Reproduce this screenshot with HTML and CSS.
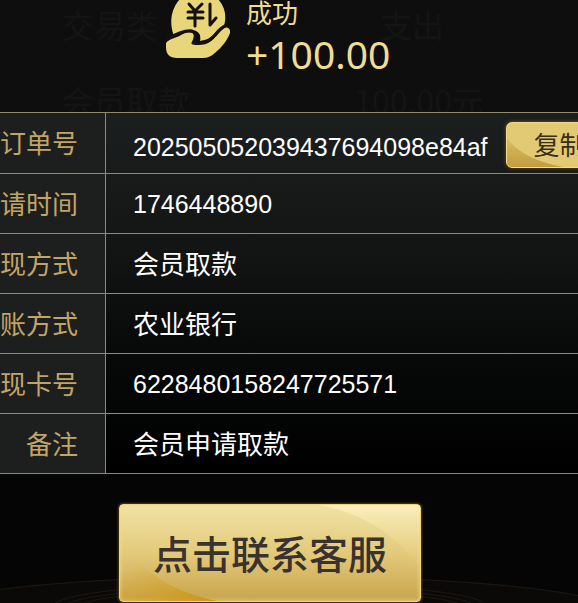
FILE: index.html
```html
<!DOCTYPE html>
<html lang="zh-CN">
  <head>
    <meta charset="UTF-8" />
    <meta name="viewport" content="width=device-width, initial-scale=1.0" />
    <title>订单详情</title>
    <link rel="stylesheet" href="styles.css">
  </head>
  <body>
    <div class="root">
      <header class="status">
        <div class="ghost" aria-hidden="true">
          <div class="ghost-row"><span>交易类</span><span>支出</span></div>
          <div class="ghost-row"><span>会员取款</span><span>100.00元</span></div>
        </div>
        <svg class="status-icon" viewBox="0 0 64 58" aria-hidden="true">
          <path class="gold" d="M7 33C3 20 6 7 15 -2Q33 -16 51 -2C59 6 61 16 58 26C54 27 51 30 47 35C43 39 39 40 34 41Q36 31 26 30Q21 31 7 35Z" />
          <path class="gold" d="M0 43C4 38 11 38 17 34C22 32 27 32 29 35C30 38 28 41 26 43Q35 45 43 42C49 39 52 33 57 29C60 26 65 28 64 33C61 41 55 48 50 52Q44 58 37 58H11Q0 58 0 47Z" />
          <path class="cut" d="M0 40C8 34 20 30 26 31Q32 34 27 43Q37 45 44 40C50 36 52 29 59 26" />
          <path class="sign" d="M23 4L29 11L36 4M22 12H37M22 18H37M29 11V26M44 4V25L50 18" />
        </svg>
        <div class="status-text">
          <div class="status-title">成功</div>
          <div class="amount">+100.00</div>
        </div>
      </header>
      <table class="detail">
        <tr>
          <th scope="row">订单号</th>
          <td>
            <div class="order">
              <span class="number">202505052039437694098e84af</span>
              <button class="copy" type="button">复制</button>
            </div>
          </td>
        </tr>
        <tr>
          <th scope="row">请时间</th>
          <td><span class="number">1746448890</span></td>
        </tr>
        <tr>
          <th scope="row">现方式</th>
          <td>会员取款</td>
        </tr>
        <tr>
          <th scope="row">账方式</th>
          <td>农业银行</td>
        </tr>
        <tr>
          <th scope="row">现卡号</th>
          <td><span class="number">6228480158247725571</span></td>
        </tr>
        <tr>
          <th scope="row">备注</th>
          <td>会员申请取款</td>
        </tr>
      </table>
      <footer class="action">
        <svg class="floor" viewBox="0 0 578 40" preserveAspectRatio="none" aria-hidden="true">
          <ellipse class="floor-glow" cx="270" cy="44" rx="330" ry="32" />
          <ellipse cx="270" cy="50" rx="350" ry="37" />
          <ellipse cx="270" cy="44" rx="218" ry="24" />
          <ellipse cx="270" cy="44" rx="205" ry="20" />
          <ellipse cx="270" cy="44" rx="192" ry="17" />
        </svg>
        <button class="service" type="button">
          <svg class="shine" viewBox="0 0 302 98" preserveAspectRatio="none" aria-hidden="true">
            <defs>
              <linearGradient id="corner" x1="0" y1="0" x2="1" y2="1">
                <stop offset="0.3" stop-color="#d4a020" stop-opacity="0" />
                <stop offset="1" stop-color="#cc9414" />
              </linearGradient>
              <linearGradient id="sheen" x1="0" y1="0" x2="0" y2="1">
                <stop offset="0" stop-color="#fff6cc" stop-opacity="0.6" />
                <stop offset="1" stop-color="#f0dc90" stop-opacity="0" />
              </linearGradient>
            </defs>
            <path fill="url(#corner)" d="M0 30C16 65 50 88 98 98H0Z" />
            <path fill="url(#sheen)" d="M200 0C240 7 280 30 302 65V0Z" />
          </svg>
          <span class="service-label">点击联系客服</span>
        </button>
      </footer>
    </div>
  </body>
</html>
```

FILE: styles.css
```css
* {
  box-sizing: border-box;
}

html,
body {
  margin: 0;
  padding: 0;
  height: 100%;
}

body {
  background: #050505;
  color: #fff;
  font-family: "Noto Sans CJK SC", sans-serif;
  font-size: 26px;
  overflow: hidden;
}

.root {
  display: flex;
  flex-direction: column;
  min-height: 100%;
}

.status {
  position: relative;
  display: flex;
  gap: 16px;
  height: 112px;
  padding-left: 166px;
  background: #0e0e0e;
  overflow: hidden;
}

/* faded row of the list behind the dialog */
.ghost {
  position: absolute;
  top: 0;
  left: 62px;
  right: 94px;
  color: #141414;
  font-size: 32px;
  line-height: 48px;
}

.ghost-row {
  display: flex;
  justify-content: space-between;
  margin-bottom: 28px;
}

.ghost-row:first-child {
  padding-right: 40px;
}

.status-icon {
  position: relative;
  width: 64px;
  height: 58px;
}

.gold {
  fill: #e9d57a;
}

.cut,
.sign {
  fill: none;
  stroke: #14120a;
  stroke-width: 3;
  stroke-linecap: round;
  stroke-linejoin: round;
}

.status-text {
  position: relative;
  color: #f1dc94;
}

.status-title {
  line-height: 24px;
}

.amount {
  font-family: "Noto Sans", sans-serif;
  font-size: 39px;
  line-height: 60px;
}

.detail {
  width: 100%;
  table-layout: fixed;
  border-collapse: separate;
  border-spacing: 0;
  border-bottom: 1px solid #8c8876;
  background: linear-gradient(#1c1f1f, #141615 35%, #080909 65%, #000);
}

.detail th,
.detail td {
  height: 60px;
  padding: 0 0 2px;
  border-top: 1px solid #928a68;
  line-height: 32px;
  white-space: nowrap;
}

.detail th {
  width: 106px;
  padding-right: 27px;
  border-right: 1px solid #928a68;
  background: #1d1f1e;
  color: #c2a466;
  font-weight: 400;
  text-align: right;
}

.detail td {
  padding-left: 27px;
  overflow: hidden;
}

.number {
  font-family: "Liberation Sans", Arial, sans-serif;
  font-size: 25px;
}

.order {
  display: flex;
  align-items: center;
  gap: 18px;
  padding-top: 9px;
}

.copy {
  flex: none;
  width: 108px;
  height: 46px;
  margin-bottom: 3px;
  padding: 0 0 2px;
  border: 1px solid #f3dc8c;
  border-radius: 6px;
  background:
    radial-gradient(ellipse at 80% 0, #e2ca74 74%, transparent 75%),
    linear-gradient(#e6cf7a, #c39c3e);
  box-shadow: 0 0 4px #6b5212;
  color: #3a2e18;
  font-family: inherit;
  font-size: 26px;
  line-height: 32px;
}

.action {
  position: relative;
  display: flex;
  flex: 1;
  justify-content: center;
  align-items: flex-start;
  padding: 30px 38px 0 0;
}

.floor {
  position: absolute;
  bottom: 0;
  left: 0;
  width: 100%;
  height: 40px;
}

.floor ellipse {
  fill: none;
  stroke: #1c1712;
}

.floor .floor-glow {
  fill: #0b0908;
  stroke: none;
}

.service {
  position: relative;
  width: 302px;
  height: 98px;
  padding: 0 0 2px;
  border: 1px solid #f0d47c;
  border-radius: 4px;
  background: linear-gradient(#f0e3a6, #e3ca7a 50%, #c9a44d);
  box-shadow: 0 0 3px #a07a20, inset 0 0 4px #f8dc80;
  color: #3a322e;
  font-family: inherit;
  font-size: 39px;
  font-weight: 500;
  line-height: 56px;
  overflow: hidden;
}

.shine {
  position: absolute;
  inset: 0;
  width: 100%;
  height: 100%;
}

.service-label {
  position: relative;
}
```
